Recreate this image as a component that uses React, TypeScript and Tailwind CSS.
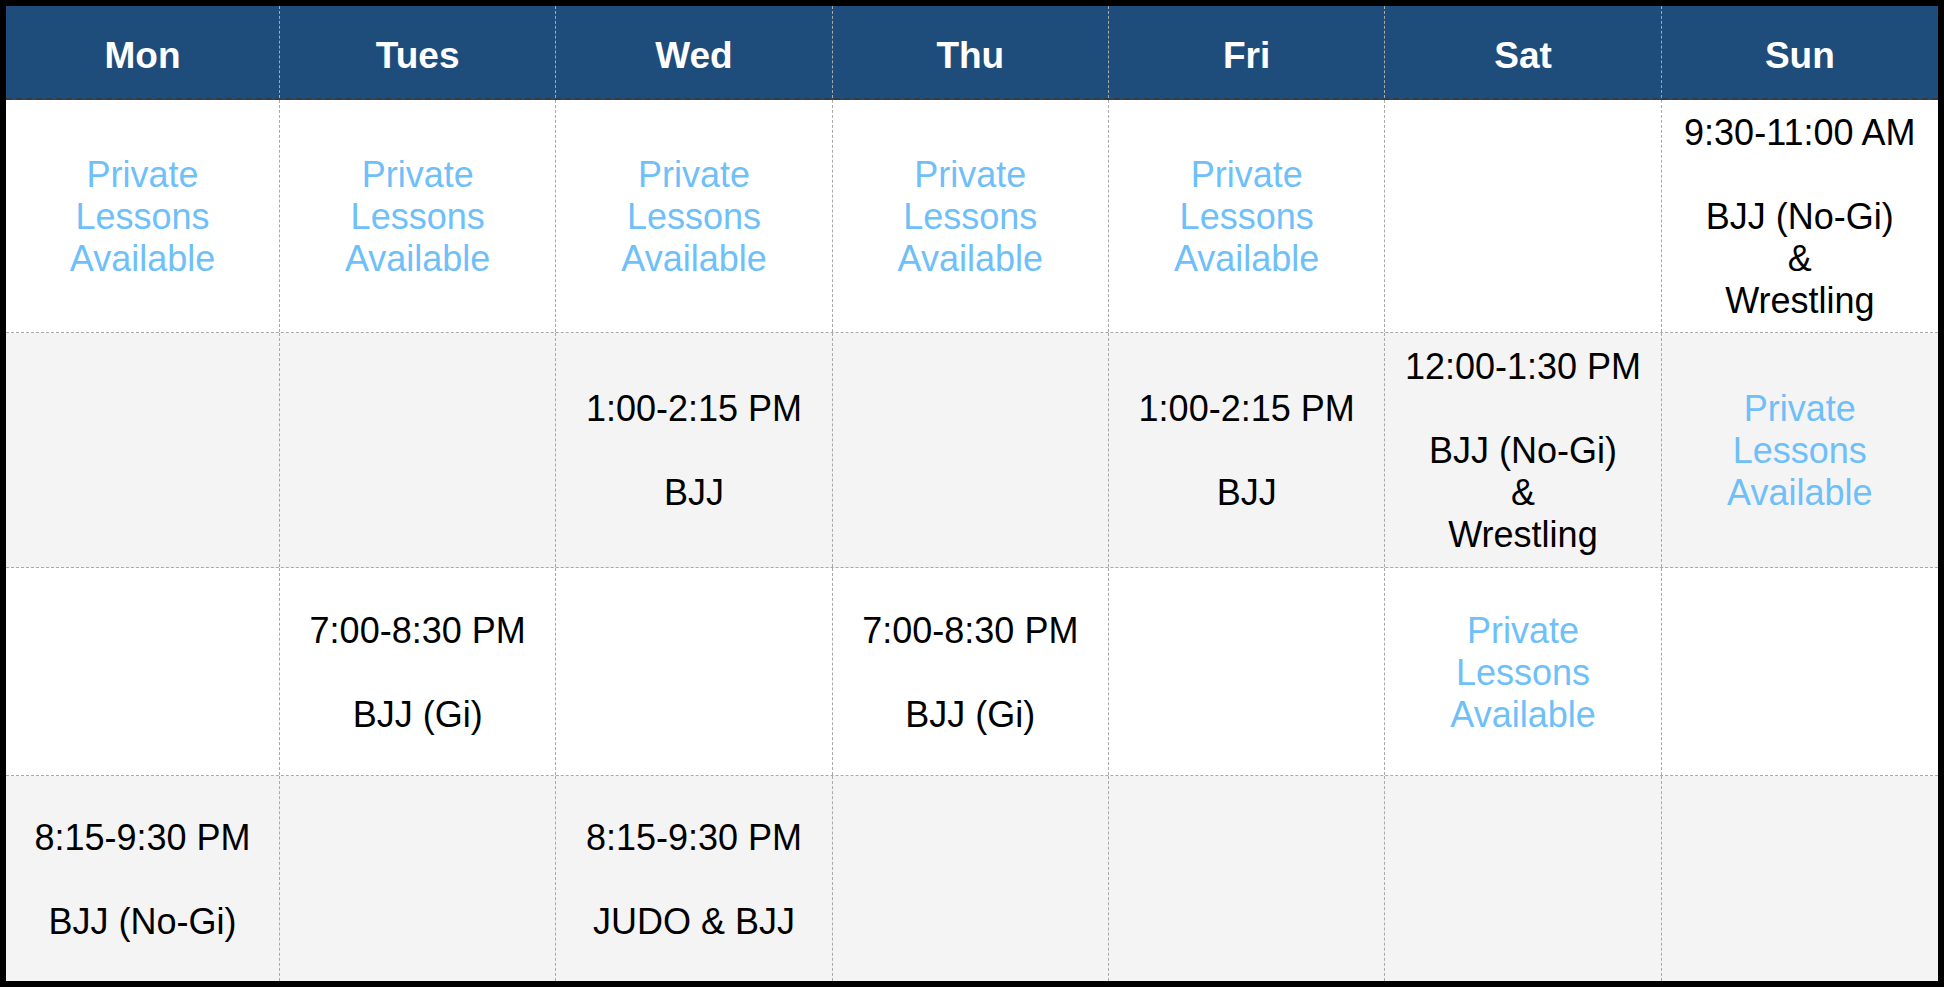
import React from "react";

type Cell = string[] | "private" | null;

const days = ["Mon", "Tues", "Wed", "Thu", "Fri", "Sat", "Sun"];

const rows: { h: string; bg: string; cells: Cell[] }[] = [
  {
    h: "h-[234px]",
    bg: "bg-white",
    cells: [
      "private",
      "private",
      "private",
      "private",
      "private",
      null,
      ["9:30-11:00 AM", "", "BJJ (No-Gi)", "&", "Wrestling"],
    ],
  },
  {
    h: "h-[235px]",
    bg: "bg-[#f4f4f4]",
    cells: [
      null,
      null,
      ["1:00-2:15 PM", "", "BJJ"],
      null,
      ["1:00-2:15 PM", "", "BJJ"],
      ["12:00-1:30 PM", "", "BJJ (No-Gi)", "&", "Wrestling"],
      "private",
    ],
  },
  {
    h: "h-[209px]",
    bg: "bg-white",
    cells: [
      null,
      ["7:00-8:30 PM", "", "BJJ (Gi)"],
      null,
      ["7:00-8:30 PM", "", "BJJ (Gi)"],
      null,
      "private",
      null,
    ],
  },
  {
    h: "h-[205px]",
    bg: "bg-[#f4f4f4]",
    cells: [
      ["8:15-9:30 PM", "", "BJJ (No-Gi)"],
      null,
      ["8:15-9:30 PM", "", "JUDO & BJJ"],
      null,
      null,
      null,
      null,
    ],
  },
];

function CellContent({ cell }: { cell: Cell }) {
  if (cell === null) return null;
  if (cell === "private") {
    return (
      <div className="text-[#6fbff8]">
        <div>Private</div>
        <div>Lessons</div>
        <div>Available</div>
      </div>
    );
  }
  return (
    <div className="text-black">
      {cell.map((l, i) => (
        <div key={i} className="h-[42px]">
          {l}
        </div>
      ))}
    </div>
  );
}

export default function App() {
  return (
    <div
      className="w-[1944px] h-[987px] bg-black p-[6px] overflow-hidden"
      style={{ fontFamily: '"Liberation Sans", Arial, Helvetica, sans-serif' }}
    >
      <div className="flex flex-col w-full h-full">
        <div className="grid grid-cols-[274px_repeat(6,1fr)] h-[92px] bg-[#1f4d7b] border-b-2 border-dashed border-[#3a3a3a] box-content">
          {days.map((d, i) => (
            <div
              key={d}
              className={`flex items-center justify-center text-white font-bold text-[37px] leading-[42px] pt-[8px] ${
                i < 6 ? "border-r border-dashed border-[#a9a9a9]" : ""
              }`}
            >
              {d}
            </div>
          ))}
        </div>
        {rows.map((r, ri) => (
          <div
            key={ri}
            className={`grid grid-cols-[274px_repeat(6,1fr)] ${r.h} ${r.bg} ${
              ri < rows.length - 1 ? "border-b border-dashed border-[#a9a9a9]" : ""
            }`}
          >
            {r.cells.map((c, ci) => (
              <div
                key={ci}
                className={`flex items-center justify-center text-center text-[36px] leading-[42px] pt-[2px] ${
                  ci < 6 ? "border-r border-dashed border-[#a9a9a9]" : ""
                }`}
              >
                <CellContent cell={c} />
              </div>
            ))}
          </div>
        ))}
      </div>
    </div>
  );
}
